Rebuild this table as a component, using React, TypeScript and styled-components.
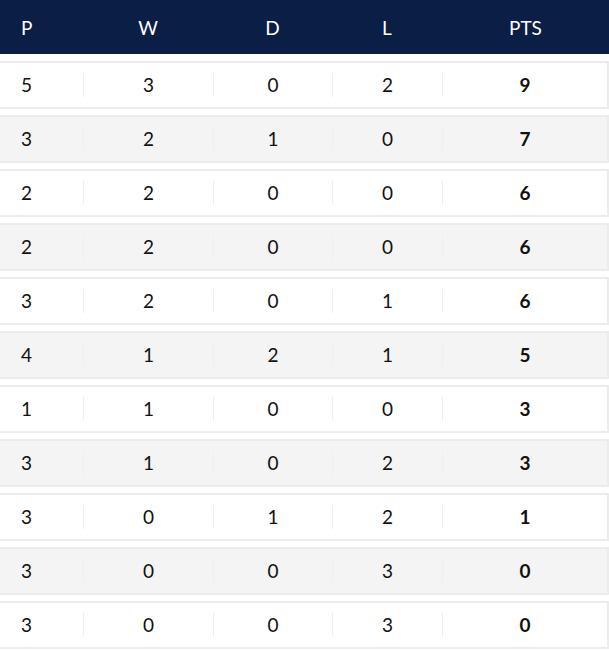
import React from "react";
import { styled, createGlobalStyle } from "styled-components";

const GlobalStyle = createGlobalStyle`
  body {
    margin: 0;
    background: #ffffff;
    font-family: Lato, "Open Sans", sans-serif;
  }
`;

const standings = [
  [5, 3, 0, 2, 9],
  [3, 2, 1, 0, 7],
  [2, 2, 0, 0, 6],
  [2, 2, 0, 0, 6],
  [3, 2, 0, 1, 6],
  [4, 1, 2, 1, 5],
  [1, 1, 0, 0, 3],
  [3, 1, 0, 2, 3],
  [3, 0, 1, 2, 1],
  [3, 0, 0, 3, 0],
  [3, 0, 0, 3, 0],
];

const headings = ["P", "W", "D", "L", "PTS"];

function App() {
  return (
    <>
      <GlobalStyle />
      <Table>
        <HeadRow>
          {headings.map((h, i) => (
            <HeadCell key={h} $first={i === 0}>
              {h}
            </HeadCell>
          ))}
        </HeadRow>
        <Body>
          {standings.map((row, r) => (
            <Row key={r} $striped={r % 2 === 1}>
              {row.map((value, i) => (
                <Cell key={i} $first={i === 0} $bold={i === row.length - 1}>
                  {value}
                </Cell>
              ))}
            </Row>
          ))}
        </Body>
      </Table>
    </>
  );
}

export default App;

const columns = "83px 130px 119px 110px 1fr";

const Table = styled.div`
  width: 609px;
  display: flex;
  flex-direction: column;
`;

const HeadRow = styled.div`
  display: grid;
  grid-template-columns: ${columns};
  align-items: center;
  height: 54px;
  background: #0b1e46;
`;

const HeadCell = styled.div<{ $first?: boolean }>`
  color: #ffffff;
  font-size: 19px;
  text-align: ${({ $first }) => ($first ? "left" : "center")};
  padding-left: ${({ $first }) => ($first ? "21px" : "0")};
`;

const Body = styled.div`
  display: flex;
  flex-direction: column;
  row-gap: 6px;
  padding-top: 7px;
`;

const Row = styled.div<{ $striped?: boolean }>`
  display: grid;
  grid-template-columns: ${columns};
  align-items: center;
  height: 44px;
  border: 2px solid #ececec;
  border-left: none;
  background: ${({ $striped }) => ($striped ? "#f4f4f4" : "#ffffff")};
`;

const Cell = styled.div<{ $first?: boolean; $bold?: boolean }>`
  height: 24px;
  line-height: 24px;
  font-size: 19px;
  color: #111111;
  font-weight: ${({ $bold }) => ($bold ? 700 : 400)};
  text-align: ${({ $first }) => ($first ? "left" : "center")};
  padding-left: ${({ $first }) => ($first ? "21px" : "0")};
  border-left: ${({ $first }) => ($first ? "none" : "1px solid #efefef")};
`;
